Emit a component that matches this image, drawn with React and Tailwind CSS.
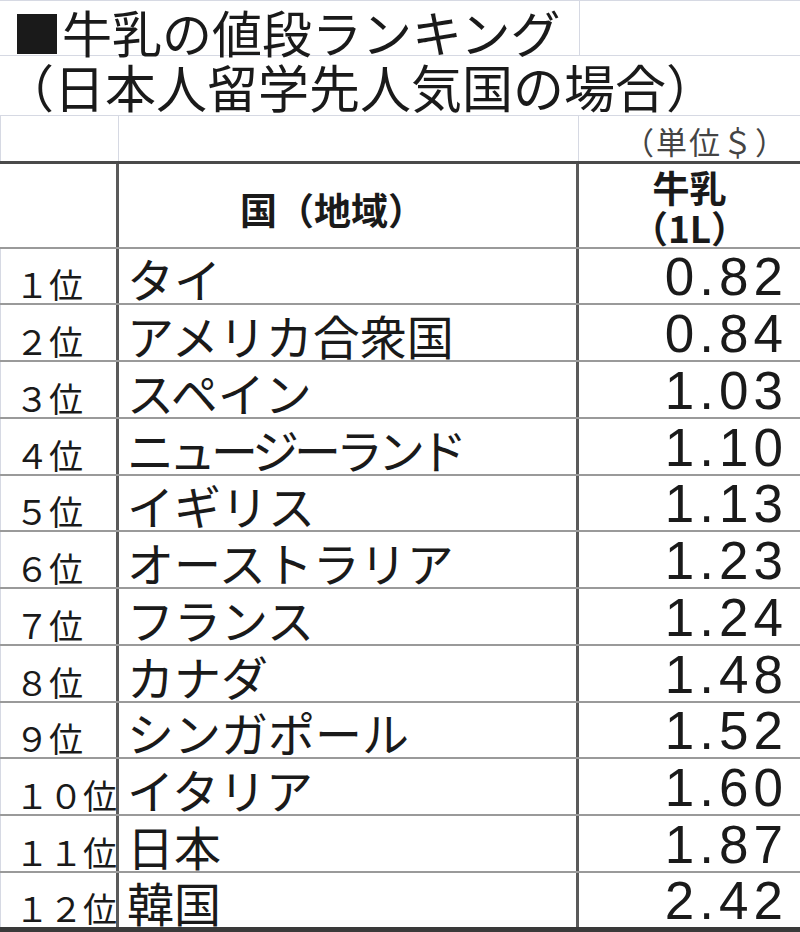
import React from "react";

const rows = [
  ["１位", "タイ", "0.82", ""],
  ["２位", "アメリカ合衆国", "0.84", ""],
  ["３位", "スペイン", "1.03", ""],
  ["４位", "ニュージーランド", "1.10", "tracking-[-5px]"],
  ["５位", "イギリス", "1.13", ""],
  ["６位", "オーストラリア", "1.23", ""],
  ["７位", "フランス", "1.24", ""],
  ["８位", "カナダ", "1.48", ""],
  ["９位", "シンガポール", "1.52", ""],
  ["１０位", "イタリア", "1.60", ""],
  ["１１位", "日本", "1.87", ""],
  ["１２位", "韓国", "2.42", ""],
];

const heights = [
  "h-[56px]", "h-[57px]", "h-[57px]", "h-[57px]", "h-[56px]", "h-[57px]",
  "h-[57px]", "h-[57px]", "h-[56px]", "h-[57px]", "h-[57px]", "h-[59px]",
];

export default function App() {
  return (
    <div className="w-[800px] h-[932px] bg-white overflow-hidden text-[#1a1a1a] font-['Noto_Sans_CJK_JP',sans-serif]">
      {/* Title row */}
      <div className="flex h-[56px] border-t border-b border-[#d6d9e3]">
        <div className="w-[579px] flex items-center pl-[12px] pt-[6px] text-[50px] leading-none whitespace-nowrap">
          ■牛乳の値段ランキング
        </div>
        <div className="flex-1 border-l border-[#d6d9e3]" />
      </div>
      {/* Subtitle row */}
      <div className="flex h-[60px] border-b border-[#d6d9e3]">
        <div className="flex items-center pl-[3px] pt-[2px] text-[51px] leading-none whitespace-nowrap">
          （日本人留学先人気国の場合）
        </div>
      </div>
      {/* Unit row */}
      <div className="grid grid-cols-[119px_460px_221px] h-[45px]">
        <div className="border-r border-[#d6d9e3] border-l" />
        <div className="border-r border-[#d6d9e3]" />
        <div className="flex items-end justify-end pr-[12px] pb-[5px] text-[31px] tracking-[2px] leading-none text-[#444] whitespace-nowrap">
          （単位＄）
        </div>
      </div>
      {/* Header row */}
      <div className="grid grid-cols-[119px_460px_221px] h-[88px] border-t-[3px] border-b-2 border-t-[#4a4a4a] border-b-[#9a9a9a]">
        <div className="border-r-[3px] border-[#5a5a5a]" />
        <div className="border-r-[3px] border-[#5a5a5a] flex items-center justify-center pr-[30px] pt-[8px] text-[37px] font-bold leading-none whitespace-nowrap">
          国（地域）
        </div>
        <div className="flex flex-col items-center justify-center text-[37px] font-bold leading-[40px] pt-[2px] whitespace-nowrap">
          <span>牛乳</span>
          <span>（1L）</span>
        </div>
      </div>
      {/* Data rows */}
      {rows.map(([rank, name, price, extra], i) => (
        <div
          key={rank}
          className={
            "grid grid-cols-[119px_460px_221px] " +
            heights[i] +
            " " +
            (i === rows.length - 1
              ? "border-b-[5px] border-[#3a3a3a]"
              : "border-b-2 border-[#9a9a9a]")
          }
        >
          <div className="border-r-[3px] border-r-[#5a5a5a] border-l border-l-[#d6d9e3] flex items-end pl-[14px] pb-[2px] text-[34px] leading-none whitespace-nowrap overflow-visible">
            {rank}
          </div>
          <div
            className={
              "border-r-[3px] border-r-[#5a5a5a] flex items-end pl-[8px] pb-[2px] text-[47px] leading-none whitespace-nowrap " +
              extra
            }
          >
            {name}
          </div>
          <div className="flex items-end justify-end pr-[12px] pb-0 text-[53px] leading-none tracking-[5px] font-['Liberation_Sans',sans-serif]">
            {price}
          </div>
        </div>
      ))}
    </div>
  );
}
